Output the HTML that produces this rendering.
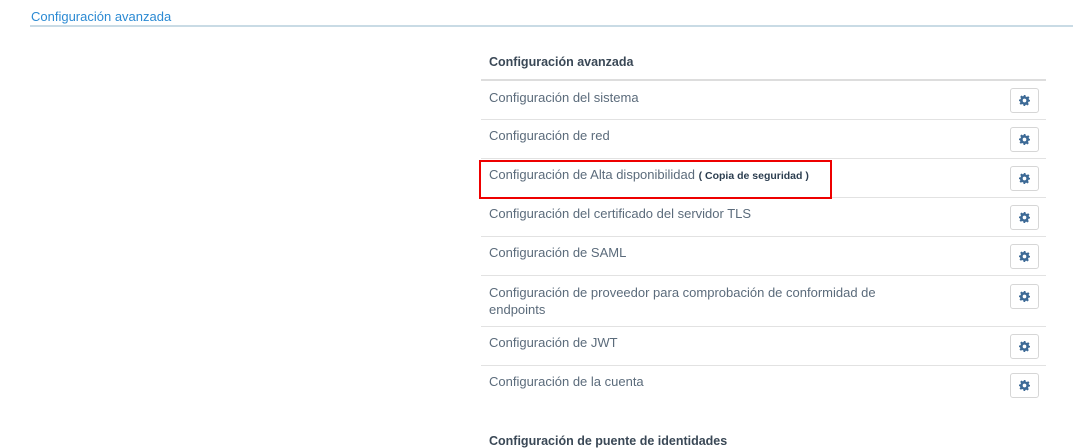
<!DOCTYPE html><html><head><meta charset="utf-8"><style>
body{margin:0;width:1073px;height:439px;overflow:hidden;background:#fff;font-family:"Liberation Sans",sans-serif;position:relative}
.t{position:absolute;left:31px;top:9px;font-size:13px;color:#2b8ad3}
.ul{position:absolute;left:30px;top:25px;width:1043px;height:2px;background:#c9dbe5}
.hd{position:absolute;left:489px;top:55px;font-size:12.5px;font-weight:bold;color:#3a4856}
.hl{position:absolute;left:481px;top:79px;width:565px;height:2px;background:#ddd}
.r{position:absolute;left:481px;width:565px;border-bottom:1px solid #e2e2e2}
.r span{position:absolute;left:8px;font-size:13px;color:#5b6b7b;line-height:16px;width:420px}
.g{position:absolute;left:529px;width:27px;height:23px;border:1px solid #d6d6d6;border-radius:3px;background:#fff}
.g svg{position:absolute;left:8px;top:6px}
.box{position:absolute;left:479px;top:160px;width:349px;height:35px;border:2px solid #e00}
.b{position:absolute;left:489px;top:434px;font-size:12.5px;font-weight:bold;color:#3a4856}
</style></head><body>
<div class="t">Configuración avanzada</div><div class="ul"></div>
<div class="hd">Configuración avanzada</div><div class="hl"></div>
<div class="r" style="top:81px;height:38px"><span style="top:9px">Configuración del sistema</span><div class="g" style="top:7px"><svg width="11" height="11" viewBox="0 0 12 12"><path fill="#3d6a96" d="M5 0h2l.3 1.6 1.3.6 1.4-.9 1.4 1.4-.9 1.4.6 1.3L12 5v2l-1.6.3-.6 1.3.9 1.4-1.4 1.4-1.4-.9-1.3.6L7 12H5l-.3-1.6-1.3-.6-1.4.9L.6 9.3l.9-1.4-.6-1.3L0 7V5l1.6-.3.6-1.3-.9-1.4L2.7.6l1.4.9 1.3-.6zM6 4a2 2 0 100 4 2 2 0 000-4z"/></svg></div></div>
<div class="r" style="top:120px;height:38px"><span style="top:8px">Configuración de red</span><div class="g" style="top:7px"><svg width="11" height="11" viewBox="0 0 12 12"><path fill="#3d6a96" d="M5 0h2l.3 1.6 1.3.6 1.4-.9 1.4 1.4-.9 1.4.6 1.3L12 5v2l-1.6.3-.6 1.3.9 1.4-1.4 1.4-1.4-.9-1.3.6L7 12H5l-.3-1.6-1.3-.6-1.4.9L.6 9.3l.9-1.4-.6-1.3L0 7V5l1.6-.3.6-1.3-.9-1.4L2.7.6l1.4.9 1.3-.6zM6 4a2 2 0 100 4 2 2 0 000-4z"/></svg></div></div>
<div class="r" style="top:159px;height:38px"><span style="top:8px">Configuración de Alta disponibilidad <b style="font-size:10.5px;color:#2c3e50">( Copia de seguridad )</b></span><div class="g" style="top:7px"><svg width="11" height="11" viewBox="0 0 12 12"><path fill="#3d6a96" d="M5 0h2l.3 1.6 1.3.6 1.4-.9 1.4 1.4-.9 1.4.6 1.3L12 5v2l-1.6.3-.6 1.3.9 1.4-1.4 1.4-1.4-.9-1.3.6L7 12H5l-.3-1.6-1.3-.6-1.4.9L.6 9.3l.9-1.4-.6-1.3L0 7V5l1.6-.3.6-1.3-.9-1.4L2.7.6l1.4.9 1.3-.6zM6 4a2 2 0 100 4 2 2 0 000-4z"/></svg></div></div>
<div class="r" style="top:198px;height:38px"><span style="top:8px">Configuración del certificado del servidor TLS</span><div class="g" style="top:7px"><svg width="11" height="11" viewBox="0 0 12 12"><path fill="#3d6a96" d="M5 0h2l.3 1.6 1.3.6 1.4-.9 1.4 1.4-.9 1.4.6 1.3L12 5v2l-1.6.3-.6 1.3.9 1.4-1.4 1.4-1.4-.9-1.3.6L7 12H5l-.3-1.6-1.3-.6-1.4.9L.6 9.3l.9-1.4-.6-1.3L0 7V5l1.6-.3.6-1.3-.9-1.4L2.7.6l1.4.9 1.3-.6zM6 4a2 2 0 100 4 2 2 0 000-4z"/></svg></div></div>
<div class="r" style="top:237px;height:38px"><span style="top:8px">Configuración de SAML</span><div class="g" style="top:7px"><svg width="11" height="11" viewBox="0 0 12 12"><path fill="#3d6a96" d="M5 0h2l.3 1.6 1.3.6 1.4-.9 1.4 1.4-.9 1.4.6 1.3L12 5v2l-1.6.3-.6 1.3.9 1.4-1.4 1.4-1.4-.9-1.3.6L7 12H5l-.3-1.6-1.3-.6-1.4.9L.6 9.3l.9-1.4-.6-1.3L0 7V5l1.6-.3.6-1.3-.9-1.4L2.7.6l1.4.9 1.3-.6zM6 4a2 2 0 100 4 2 2 0 000-4z"/></svg></div></div>
<div class="r" style="top:276px;height:50px"><span style="top:8px;line-height:17px">Configuración de proveedor para comprobación de conformidad de endpoints</span><div class="g" style="top:8px"><svg width="11" height="11" viewBox="0 0 12 12"><path fill="#3d6a96" d="M5 0h2l.3 1.6 1.3.6 1.4-.9 1.4 1.4-.9 1.4.6 1.3L12 5v2l-1.6.3-.6 1.3.9 1.4-1.4 1.4-1.4-.9-1.3.6L7 12H5l-.3-1.6-1.3-.6-1.4.9L.6 9.3l.9-1.4-.6-1.3L0 7V5l1.6-.3.6-1.3-.9-1.4L2.7.6l1.4.9 1.3-.6zM6 4a2 2 0 100 4 2 2 0 000-4z"/></svg></div></div>
<div class="r" style="top:327px;height:38px"><span style="top:8px">Configuración de JWT</span><div class="g" style="top:7px"><svg width="11" height="11" viewBox="0 0 12 12"><path fill="#3d6a96" d="M5 0h2l.3 1.6 1.3.6 1.4-.9 1.4 1.4-.9 1.4.6 1.3L12 5v2l-1.6.3-.6 1.3.9 1.4-1.4 1.4-1.4-.9-1.3.6L7 12H5l-.3-1.6-1.3-.6-1.4.9L.6 9.3l.9-1.4-.6-1.3L0 7V5l1.6-.3.6-1.3-.9-1.4L2.7.6l1.4.9 1.3-.6zM6 4a2 2 0 100 4 2 2 0 000-4z"/></svg></div></div>
<div class="r" style="top:366px;height:38px;border:0"><span style="top:8px">Configuración de la cuenta</span><div class="g" style="top:7px"><svg width="11" height="11" viewBox="0 0 12 12"><path fill="#3d6a96" d="M5 0h2l.3 1.6 1.3.6 1.4-.9 1.4 1.4-.9 1.4.6 1.3L12 5v2l-1.6.3-.6 1.3.9 1.4-1.4 1.4-1.4-.9-1.3.6L7 12H5l-.3-1.6-1.3-.6-1.4.9L.6 9.3l.9-1.4-.6-1.3L0 7V5l1.6-.3.6-1.3-.9-1.4L2.7.6l1.4.9 1.3-.6zM6 4a2 2 0 100 4 2 2 0 000-4z"/></svg></div></div>
<div class="box"></div>
<div class="b">Configuración de puente de identidades</div>
</body></html>
